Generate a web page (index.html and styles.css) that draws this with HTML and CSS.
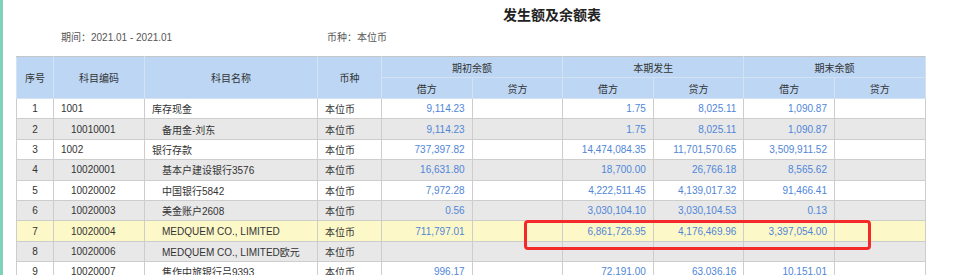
FILE: index.html
```html
<!DOCTYPE html>
<html lang="zh-CN">
<head>
    <meta charset="UTF-8">
    <title>发生额及余额表</title>
    <link rel="stylesheet" href="styles.css">
</head>
<body>
    <div class="page">
        <h1 class="title">发生额及余额表</h1>

        <div class="meta">
            <span class="meta-item">期间：2021.01 - 2021.01</span>
            <span class="meta-item">币种：本位币</span>
        </div>

        <div class="table-wrap">
            <table class="report">
                <colgroup>
                    <col class="c-no">
                    <col class="c-code">
                    <col class="c-name">
                    <col class="c-cur">
                    <col class="c-amt">
                    <col class="c-amt">
                    <col class="c-amt">
                    <col class="c-amt">
                    <col class="c-amt">
                    <col class="c-amt">
                </colgroup>
                <thead>
                    <tr>
                        <th rowspan="2">序号</th>
                        <th rowspan="2">科目编码</th>
                        <th rowspan="2">科目名称</th>
                        <th rowspan="2">币种</th>
                        <th colspan="2">期初余额</th>
                        <th colspan="2">本期发生</th>
                        <th colspan="2">期末余额</th>
                    </tr>
                    <tr>
                        <th>借方</th>
                        <th>贷方</th>
                        <th>借方</th>
                        <th>贷方</th>
                        <th>借方</th>
                        <th>贷方</th>
                    </tr>
                </thead>
                <tbody>
                    <tr>
                        <td class="no">1</td>
                        <td>1001</td>
                        <td>库存现金</td>
                        <td>本位币</td>
                        <td class="num">9,114.23</td>
                        <td class="num"></td>
                        <td class="num">1.75</td>
                        <td class="num">8,025.11</td>
                        <td class="num">1,090.87</td>
                        <td class="num"></td>
                    </tr>
                    <tr class="alt">
                        <td class="no">2</td>
                        <td class="sub">10010001</td>
                        <td class="sub">备用金-刘东</td>
                        <td>本位币</td>
                        <td class="num">9,114.23</td>
                        <td class="num"></td>
                        <td class="num">1.75</td>
                        <td class="num">8,025.11</td>
                        <td class="num">1,090.87</td>
                        <td class="num"></td>
                    </tr>
                    <tr>
                        <td class="no">3</td>
                        <td>1002</td>
                        <td>银行存款</td>
                        <td>本位币</td>
                        <td class="num">737,397.82</td>
                        <td class="num"></td>
                        <td class="num">14,474,084.35</td>
                        <td class="num">11,701,570.65</td>
                        <td class="num">3,509,911.52</td>
                        <td class="num"></td>
                    </tr>
                    <tr class="alt">
                        <td class="no">4</td>
                        <td class="sub">10020001</td>
                        <td class="sub">基本户建设银行3576</td>
                        <td>本位币</td>
                        <td class="num">16,631.80</td>
                        <td class="num"></td>
                        <td class="num">18,700.00</td>
                        <td class="num">26,766.18</td>
                        <td class="num">8,565.62</td>
                        <td class="num"></td>
                    </tr>
                    <tr>
                        <td class="no">5</td>
                        <td class="sub">10020002</td>
                        <td class="sub">中国银行5842</td>
                        <td>本位币</td>
                        <td class="num">7,972.28</td>
                        <td class="num"></td>
                        <td class="num">4,222,511.45</td>
                        <td class="num">4,139,017.32</td>
                        <td class="num">91,466.41</td>
                        <td class="num"></td>
                    </tr>
                    <tr class="alt">
                        <td class="no">6</td>
                        <td class="sub">10020003</td>
                        <td class="sub">美金账户2608</td>
                        <td>本位币</td>
                        <td class="num">0.56</td>
                        <td class="num"></td>
                        <td class="num">3,030,104.10</td>
                        <td class="num">3,030,104.53</td>
                        <td class="num">0.13</td>
                        <td class="num"></td>
                    </tr>
                    <tr class="hl">
                        <td class="no">7</td>
                        <td class="sub">10020004</td>
                        <td class="sub">MEDQUEM CO., LIMITED</td>
                        <td>本位币</td>
                        <td class="num">711,797.01</td>
                        <td class="num"></td>
                        <td class="num">6,861,726.95</td>
                        <td class="num">4,176,469.96</td>
                        <td class="num">3,397,054.00</td>
                        <td class="num"></td>
                    </tr>
                    <tr class="alt">
                        <td class="no">8</td>
                        <td class="sub">10020006</td>
                        <td class="sub">MEDQUEM CO., LIMITED欧元</td>
                        <td>本位币</td>
                        <td class="num"></td>
                        <td class="num"></td>
                        <td class="num"></td>
                        <td class="num"></td>
                        <td class="num"></td>
                        <td class="num"></td>
                    </tr>
                    <tr>
                        <td class="no">9</td>
                        <td class="sub">10020007</td>
                        <td class="sub">焦作中旅银行吕9393</td>
                        <td>本位币</td>
                        <td class="num">996.17</td>
                        <td class="num"></td>
                        <td class="num">72,191.00</td>
                        <td class="num">63,036.16</td>
                        <td class="num">10,151.01</td>
                        <td class="num"></td>
                    </tr>
                </tbody>
            </table>

            <!-- annotation box drawn over row 7 -->
            <div class="mark"></div>
        </div>
    </div>
</body>
</html>
```

FILE: styles.css
```css
html, body {
    margin: 0;
    padding: 0;
    background-color: #fff;
}
body {
    font-family: Arial, "Liberation Sans", "Noto Sans CJK SC", sans-serif;
    color: #333;
    overflow: hidden;
}
.page {
    border-left: 3px solid #7dd2b9;
    min-height: 275px;
    padding: 0 0 0 13px;
}
.title {
    margin: 0;
    padding: 5px 0 0 487px;
    font-size: 14px;
    line-height: 21px;
    font-weight: bold;
    color: #222;
}
.meta {
    display: flex;
    padding: 5px 0 0 45px;
    font-size: 10px;
    line-height: 14px;
    color: #555;
}
.meta-item:first-child {
    width: 266px;
}
.table-wrap {
    position: relative;
    margin-top: 11px;
    width: 909px;
}
.report {
    width: 909px;
    table-layout: fixed;
    border-collapse: collapse;
    font-size: 10px;
    border: 1px solid #c6c6c6;
}
.c-no { width: 37px; }
.c-code { width: 91px; }
.c-name { width: 173px; }
.c-cur { width: 64px; }
.c-amt { width: 90.6px; }
.report th {
    background-color: #bcd6f3;
    border: 1px solid #d3e2f3;
    font-weight: normal;
    color: #333;
    height: 20px;
    padding: 0;
}
.report thead tr:first-child th {
    border-top-color: #c6c6c6;
}
.report td {
    border: 1px solid #cdcdcd;
    height: 19.4px;
    padding: 0 7px;
    white-space: nowrap;
    overflow: hidden;
}
.report td.no {
    text-align: center;
    padding: 0;
}
.report td.sub {
    padding-left: 17px;
}
.report td.num {
    text-align: right;
    color: #4f86d8;
}
.report tr.alt td {
    background-color: #e8e8e8;
}
.report tr.hl td {
    background-color: #fdf8c8;
}
.mark {
    position: absolute;
    left: 508px;
    top: 164px;
    width: 341px;
    height: 24px;
    border: 3px solid #f42a2a;
    border-radius: 4px;
}
```
